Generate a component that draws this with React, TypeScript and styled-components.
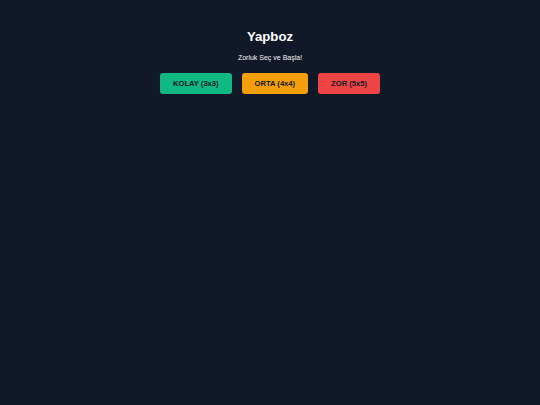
import React from 'react'
import styled, { createGlobalStyle } from 'styled-components'

const GlobalStyle = createGlobalStyle`
    html, body {
        margin: 0;
        padding: 0;
        background: #111827;
        height: 100%;
    }

    body {
        font-family: "Liberation Sans", Arial, sans-serif;
    }
`

const Screen = styled.main`
    min-height: 405px;
    display: flex;
    flex-direction: column;
    align-items: center;
    padding-top: 29px;
    box-sizing: border-box;
    background: #111827;
`

const Title = styled.h1`
    margin: 0 0 10px;
    color: #ffffff;
    font-size: 13.2px;
    font-weight: 700;
    line-height: 15px;
`

const Subtitle = styled.p`
    margin: 0 0 11px;
    color: #f3f4f6;
    font-size: 7px;
    line-height: 8px;
`

const LevelRow = styled.div`
    display: flex;
    gap: 10px;
`

const LevelBtn = styled.button<{ $bg: string }>`
    height: 21px;
    padding: 0 13px;
    border: none;
    border-radius: 3px;
    background: ${p => p.$bg};
    color: #111827;
    font-family: "Liberation Sans", Arial, sans-serif;
    font-size: 7.6px;
    font-weight: 700;
    cursor: pointer;
`

const levels = [
    { label: "KOLAY (3x3)", color: "#10b981" },
    { label: "ORTA (4x4)", color: "#f59e0b" },
    { label: "ZOR (5x5)", color: "#ef4444" },
]

function App() {
    return (
        <>
            <GlobalStyle />
            <Screen>
                <Title>Yapboz</Title>
                <Subtitle>Zorluk Seç ve Başla!</Subtitle>
                <LevelRow>
                    {levels.map(level => (
                        <LevelBtn key={level.label} $bg={level.color}>
                            {level.label}
                        </LevelBtn>
                    ))}
                </LevelRow>
            </Screen>
        </>
    )
}

export default App
